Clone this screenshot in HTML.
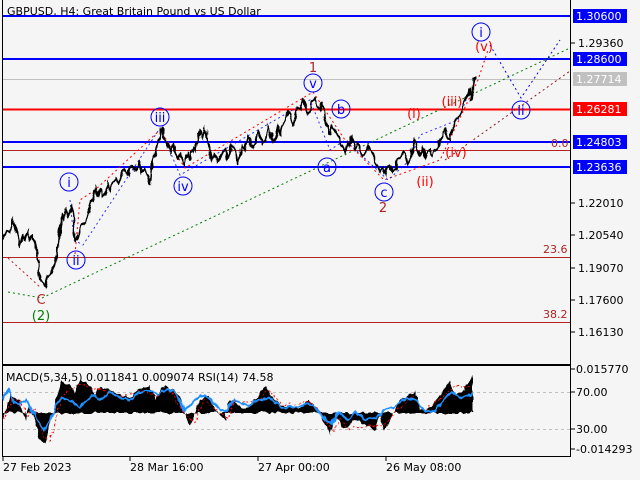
<!DOCTYPE html>
<html><head><meta charset="utf-8"><style>
html,body{margin:0;padding:0;background:#f5f5f5;}
svg{display:block;font-family:"DejaVu Sans","Liberation Sans",sans-serif;}
</style></head><body>
<svg width="640" height="480" viewBox="0 0 640 480" xmlns="http://www.w3.org/2000/svg">
<defs>
<filter id="jag" x="-5%" y="-20%" width="110%" height="140%">
<feTurbulence type="fractalNoise" baseFrequency="0.25 0.12" numOctaves="1" seed="3" result="n"/>
<feDisplacementMap in="SourceGraphic" in2="n" scale="6" xChannelSelector="R" yChannelSelector="G"/>
</filter>
</defs>
<rect width="640" height="480" fill="#f5f5f5"/>
<line x1="2.5" y1="0" x2="2.5" y2="364" stroke="#000"/>
<line x1="570.5" y1="0" x2="570.5" y2="364" stroke="#000"/>
<line x1="2" y1="364.5" x2="571" y2="364.5" stroke="#000"/>
<rect x="2.5" y="365.5" width="568" height="91" fill="none" stroke="#000"/>
<text x="7" y="15" font-size="11" fill="#000">GBPUSD, H4:  Great Britain Pound vs US Dollar</text>
<line x1="3" y1="16" x2="570" y2="16" stroke="#0000ff" stroke-width="2"/>
<line x1="3" y1="59" x2="570" y2="59" stroke="#0000ff" stroke-width="2"/>
<line x1="3" y1="79.5" x2="570" y2="79.5" stroke="#c0c0c0"/>
<line x1="3" y1="109.5" x2="570" y2="109.5" stroke="#ff0000" stroke-width="2"/>
<line x1="3" y1="142" x2="570" y2="142" stroke="#0000ff" stroke-width="2"/>
<line x1="3" y1="150.5" x2="570" y2="150.5" stroke="#b22222"/>
<line x1="3" y1="167" x2="570" y2="167" stroke="#0000ff" stroke-width="2"/>
<line x1="3" y1="257.5" x2="570" y2="257.5" stroke="#b22222"/>
<line x1="3" y1="322.5" x2="570" y2="322.5" stroke="#b22222"/>
<text x="551" y="147" font-size="11" fill="#b22222">0.0</text>
<text x="543" y="253" font-size="11" fill="#b22222">23.6</text>
<text x="543" y="318" font-size="11" fill="#b22222">38.2</text>
<line x1="42" y1="298" x2="570" y2="48" stroke="#008000" stroke-dasharray="2,3"/>
<line x1="8" y1="292" x2="42" y2="298" stroke="#008000" stroke-dasharray="2,3"/>
<line x1="445" y1="160" x2="570" y2="71" stroke="#8b1a1a" stroke-dasharray="2,3"/>
<line x1="8" y1="258" x2="40" y2="287" stroke="#b22222" stroke-dasharray="2,3"/>
<polyline points="75,254 80,200 95,190 160,130 185,168 313,92 345,140 384,180 440,160 478,80 488,50" fill="none" stroke="#ff0000" stroke-dasharray="2,3"/>
<polyline points="70,200 74,240 83,245 160,128 180,175 310,100 330,150 345,140 388,180 410,160 420,135 458,120 470,90" fill="none" stroke="#0000ff" stroke-dasharray="2,3" opacity="0.8"/>
<polyline points="490,45 521,98 560,40" fill="none" stroke="#0000ff" stroke-dasharray="2,3"/>
<g filter="url(#jag)">
<polyline fill="none" stroke="#000" stroke-width="2" points="3,240 6,230 10,232 13,220 15,226 18,238 20,245 23,236 25,240 28,231 30,240 33,236 35,242 38,258 40,280 43,283 45,287 48,276 50,275 53,268 55,262 57,250 58,245 60,228 62,215 64,218 66,210 68,216 70,212 72,208 73,215 74,232 75,242 77,236 78,240 80,232 82,225 85,222 88,215 90,205 92,200 94,194 95,188 98,195 100,190 103,197 105,195 108,184 110,190 113,182 115,178 118,184 120,180 123,172 125,170 128,175 131,166 135,170 139,162 142,172 145,168 148,178 150,185 152,165 155,155 157,145 160,136 162,128 165,140 168,146 170,152 173,144 175,150 178,158 180,155 183,162 185,165 188,152 190,160 193,148 195,150 198,138 200,132 203,138 205,128 207,134 208,145 210,152 212,160 215,154 218,162 222,152 225,150 228,158 232,146 235,150 237,158 238,165 240,152 242,145 245,150 248,136 250,140 253,148 255,145 258,132 260,135 263,144 265,140 268,126 270,130 273,142 275,140 278,128 280,135 282,126 285,120 288,112 290,115 293,124 295,120 298,108 300,110 303,100 305,105 308,114 310,112 312,102 315,98 318,106 320,110 323,102 325,118 328,128 330,135 332,126 335,130 338,136 340,140 343,146 345,152 348,142 350,145 352,138 355,150 358,144 360,148 362,156 365,155 368,146 370,150 373,156 375,160 378,168 380,172 383,168 385,175 388,166 390,165 393,172 395,170 398,160 400,158 403,152 405,155 408,164 410,160 413,146 415,140 418,150 420,155 423,148 425,158 428,152 430,150 433,156 435,152 438,146 440,140 443,132 445,130 448,138 450,140 452,130 455,122 458,118 460,115 462,105 465,100 467,96 468,95 470,88 471,100 472,100 473,85 474,78 476,78"/>
</g>
<g fill="none" stroke="#0000ff" stroke-width="1">
<circle cx="69" cy="182" r="9"/><circle cx="76" cy="260" r="9"/><circle cx="160" cy="117" r="9"/>
<circle cx="183" cy="186" r="9"/><circle cx="313" cy="83" r="9"/><circle cx="341" cy="109" r="9"/>
<circle cx="327" cy="167" r="9"/><circle cx="384" cy="192" r="9"/><circle cx="481" cy="32" r="9"/>
<circle cx="521" cy="110" r="9"/>
</g>
<g font-size="13" fill="#0000ff" text-anchor="middle">
<text x="69" y="187">i</text><text x="76" y="265">ii</text><text x="160" y="122">iii</text>
<text x="183" y="191">iv</text><text x="313" y="88">v</text><text x="341" y="114">b</text>
<text x="327" y="172">a</text><text x="384" y="197">c</text><text x="481" y="37">i</text>
<text x="521" y="115">ii</text>
</g>
<g font-size="13" fill="#ff0000" text-anchor="middle">
<text x="484" y="51">(v)</text><text x="414" y="118">(i)</text><text x="452" y="106">(iii)</text>
<text x="456" y="157">(iv)</text><text x="425" y="186">(ii)</text>
</g>
<g font-size="13" fill="#b22222" text-anchor="middle">
<text x="313" y="72">1</text><text x="383" y="212">2</text><text x="41" y="304">C</text>
</g>
<text x="41" y="320" font-size="13" fill="#008000" text-anchor="middle">(2)</text>
<g font-size="11" fill="#000">
<line x1="570" y1="43" x2="575" y2="43" stroke="#000"/><text x="578" y="47">1.29360</text>
<line x1="570" y1="203" x2="575" y2="203" stroke="#000"/><text x="578" y="207">1.22010</text>
<line x1="570" y1="235" x2="575" y2="235" stroke="#000"/><text x="578" y="239">1.20540</text>
<line x1="570" y1="268" x2="575" y2="268" stroke="#000"/><text x="578" y="272">1.19070</text>
<line x1="570" y1="300" x2="575" y2="300" stroke="#000"/><text x="578" y="304">1.17600</text>
<line x1="570" y1="332" x2="575" y2="332" stroke="#000"/><text x="578" y="336">1.16130</text>
</g>
<g font-size="11" fill="#fff">
<rect x="573" y="9" width="54" height="14" fill="#0000ff"/><text x="576" y="20">1.30600</text>
<rect x="573" y="52" width="54" height="14" fill="#0000ff"/><text x="576" y="63">1.28600</text>
<rect x="573" y="72" width="54" height="14" fill="#c0c0c0"/><text x="576" y="83">1.27714</text>
<rect x="573" y="102" width="54" height="14" fill="#ff0000"/><text x="576" y="113">1.26281</text>
<rect x="573" y="135" width="54" height="14" fill="#0000ff"/><text x="576" y="146">1.24803</text>
<rect x="573" y="160" width="54" height="14" fill="#0000ff"/><text x="576" y="171">1.23636</text>
</g>
<line x1="3" y1="392.5" x2="570" y2="392.5" stroke="#c0c0c0" stroke-dasharray="3,3"/>
<line x1="3" y1="429.5" x2="570" y2="429.5" stroke="#c0c0c0" stroke-dasharray="3,3"/>
<g filter="url(#jag)">
<polygon fill="#000" points="3,413 3,420 10,395 20,400 25,420 30,405 40,440 45,445 50,425 55,400 62,382 70,385 75,393 80,380 90,385 95,395 100,387 110,390 120,395 130,398 140,388 150,385 155,400 165,385 180,395 185,418 190,425 200,400 210,395 215,410 225,420 230,400 245,410 255,400 265,385 270,395 280,405 300,408 310,400 320,413 330,435 335,415 345,430 355,420 365,425 375,430 380,415 385,430 395,410 400,400 410,395 415,390 420,410 430,408 440,395 450,380 455,395 465,390 470,380 473,375 473,413"/>
<polyline fill="none" stroke="#ff0000" stroke-dasharray="2,2" points="4,420 12,398 22,402 28,418 34,408 44,438 50,440 56,420 62,396 70,388 80,384 92,388 102,390 122,397 142,390 157,398 168,388 186,415 194,422 204,400 216,410 228,418 234,402 258,402 268,390 282,405 312,402 322,415 334,432 340,418 348,428 368,426 384,425 398,410 412,396 424,410 444,396 454,386 470,388"/>
<polyline fill="none" stroke="#1e90ff" stroke-width="2" points="3,400 8,390 14,402 20,405 26,400 32,410 38,420 44,430 50,420 56,405 62,398 70,400 80,408 88,400 95,395 100,400 110,392 120,398 130,400 140,392 150,390 158,396 168,388 178,396 184,410 190,405 200,395 210,398 218,408 226,412 234,400 248,406 258,400 270,398 282,408 302,406 312,404 322,416 332,424 338,412 348,420 356,412 366,420 376,418 384,410 396,406 406,398 416,400 424,410 434,412 444,400 452,392 460,398 470,395 473,392"/>
</g>
<text x="6" y="381" font-size="11" fill="#000">MACD(5,34,5) 0.011841 0.009074 RSI(14) 74.58</text>
<g font-size="11" fill="#000">
<line x1="570" y1="369" x2="575" y2="369" stroke="#000"/><text x="576" y="373">0.015770</text>
<line x1="570" y1="392" x2="575" y2="392" stroke="#000"/><text x="576" y="396">70.00</text>
<line x1="570" y1="429" x2="575" y2="429" stroke="#000"/><text x="576" y="433">30.00</text>
<line x1="570" y1="449" x2="575" y2="449" stroke="#000"/><text x="576" y="453">-0.014293</text>
<line x1="3" y1="456" x2="3" y2="461" stroke="#000"/><text x="3" y="471">27 Feb 2023</text>
<line x1="130" y1="456" x2="130" y2="461" stroke="#000"/><text x="130" y="471">28 Mar 16:00</text>
<line x1="258" y1="456" x2="258" y2="461" stroke="#000"/><text x="258" y="471">27 Apr 00:00</text>
<line x1="386" y1="456" x2="386" y2="461" stroke="#000"/><text x="386" y="471">26 May 08:00</text>
</g>
</svg>
</body></html>
